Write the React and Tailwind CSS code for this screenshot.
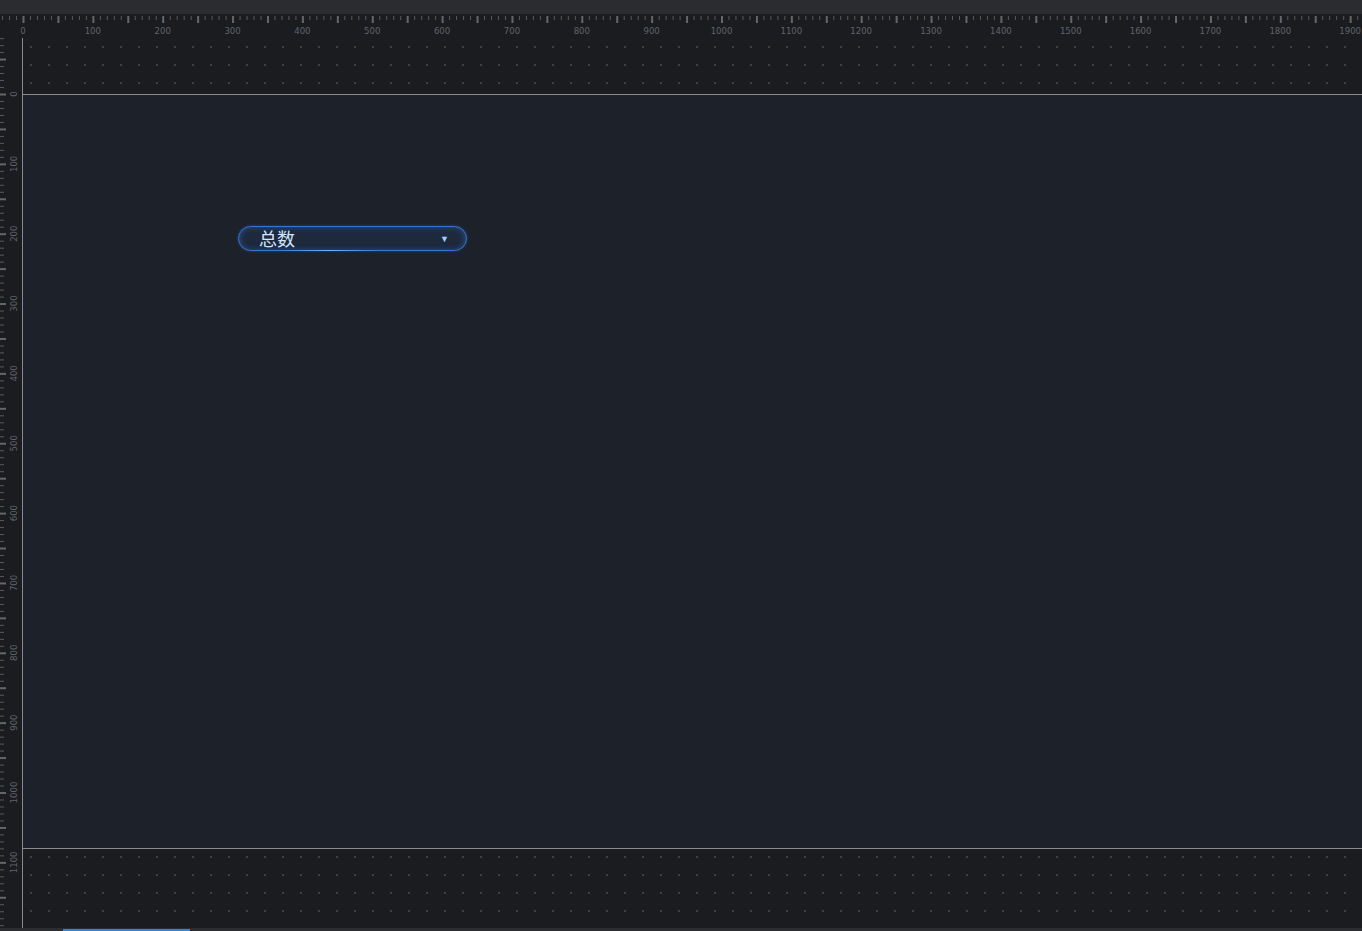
import React from 'react';

const SCALE = 0.6985;

const HRuler = () => {
  const ticks = [];
  for (let i = -3; i <= 195; i++) {
    const x = i * 10 * SCALE + 23;
    const big = i % 5 === 0;
    ticks.push(
      <rect key={'t' + i} x={big ? x - 0.5 : x} y={2} width={big ? 2 : 1} height={big ? 7 : 4} fill={big ? '#666' : '#5a5a5a'} />
    );
    if (i % 10 === 0 && i >= 0) {
      ticks.push(
        <text key={'l' + i} x={x} y={20} textAnchor="middle" fontSize="9.5" fill="#60636a" fontFamily="'DejaVu Sans Condensed', 'Liberation Sans', sans-serif">
          {i * 10}
        </text>
      );
    }
  }
  return (
    <svg width="1362" height="24" className="block">
      {ticks}
    </svg>
  );
};

const VRuler = () => {
  const ticks = [];
  for (let i = -8; i <= 125; i++) {
    const y = i * 10 * SCALE + 56;
    const big = i % 5 === 0;
    ticks.push(
      <rect key={'t' + i} x={0} y={big ? y - 0.5 : y} width={big ? 6 : 4} height={big ? 2 : 1} fill={big ? '#666' : '#5a5a5a'} />
    );
    if (i % 10 === 0 && i >= 0 && i <= 110) {
      ticks.push(
        <text key={'l' + i} x={0} y={0} textAnchor="middle" fontSize="9.5" fill="#60636a" fontFamily="'DejaVu Sans Condensed', 'Liberation Sans', sans-serif" transform={`translate(17 ${y}) rotate(-90)`}>
          {i * 10}
        </text>
      );
    }
  }
  return (
    <svg width="23" height="893" className="block">
      {ticks}
    </svg>
  );
};

const SelectBox = () => (
  <div className="absolute left-[215px] top-[131px] w-[229px] h-[25px] rounded-full border border-[#3576d6] bg-[linear-gradient(180deg,#1a2740_0%,#1f2a3c_50%,#1a2438_100%)] shadow-[inset_0_0_6px_rgba(64,140,255,0.45),0_0_3px_rgba(64,140,255,0.35)] flex items-center justify-between pl-[20px] pr-[17px]">
    <span className="text-[18px] leading-none text-[#cfe6ff] -mt-[2px] font-['Noto_Sans_CJK_SC',sans-serif]">总数</span>
    <span className="text-[9px] leading-none text-[#9fd0ff]">▼</span>
    <div className="absolute bottom-[-1px] left-[40px] w-[100px] h-px bg-[linear-gradient(90deg,transparent,#6fb2ff,transparent)]" />
  </div>
);

export default function App() {
  return (
    <div className="w-[1362px] h-[931px] bg-[#1b1c1f] overflow-hidden flex flex-col">
      <div className="h-[14px] bg-[#2b2c30] shrink-0" />
      <div className="h-[24px] shrink-0 bg-[#1b1c1f]">
        <HRuler />
      </div>
      <div className="flex flex-1 min-h-0">
        <div className="w-[23px] shrink-0 border-r border-[#8a8a8a]">
          <VRuler />
        </div>
        <div className="flex-1 bg-[radial-gradient(circle,#3e3f43_0.9px,transparent_1.2px)] bg-[length:18px_18px] bg-[position:-1px_0px] pt-[56px]">
          <div className="relative h-[755px] bg-[#1d212a] border-y border-[#8c8c8c]">
            <SelectBox />
          </div>
        </div>
      </div>
      <div className="h-[3px] shrink-0 bg-[#2c2d31] relative">
        <div className="absolute left-[63px] top-[1px] w-[127px] h-[2px] bg-[#2f86dc]" />
      </div>
    </div>
  );
}
